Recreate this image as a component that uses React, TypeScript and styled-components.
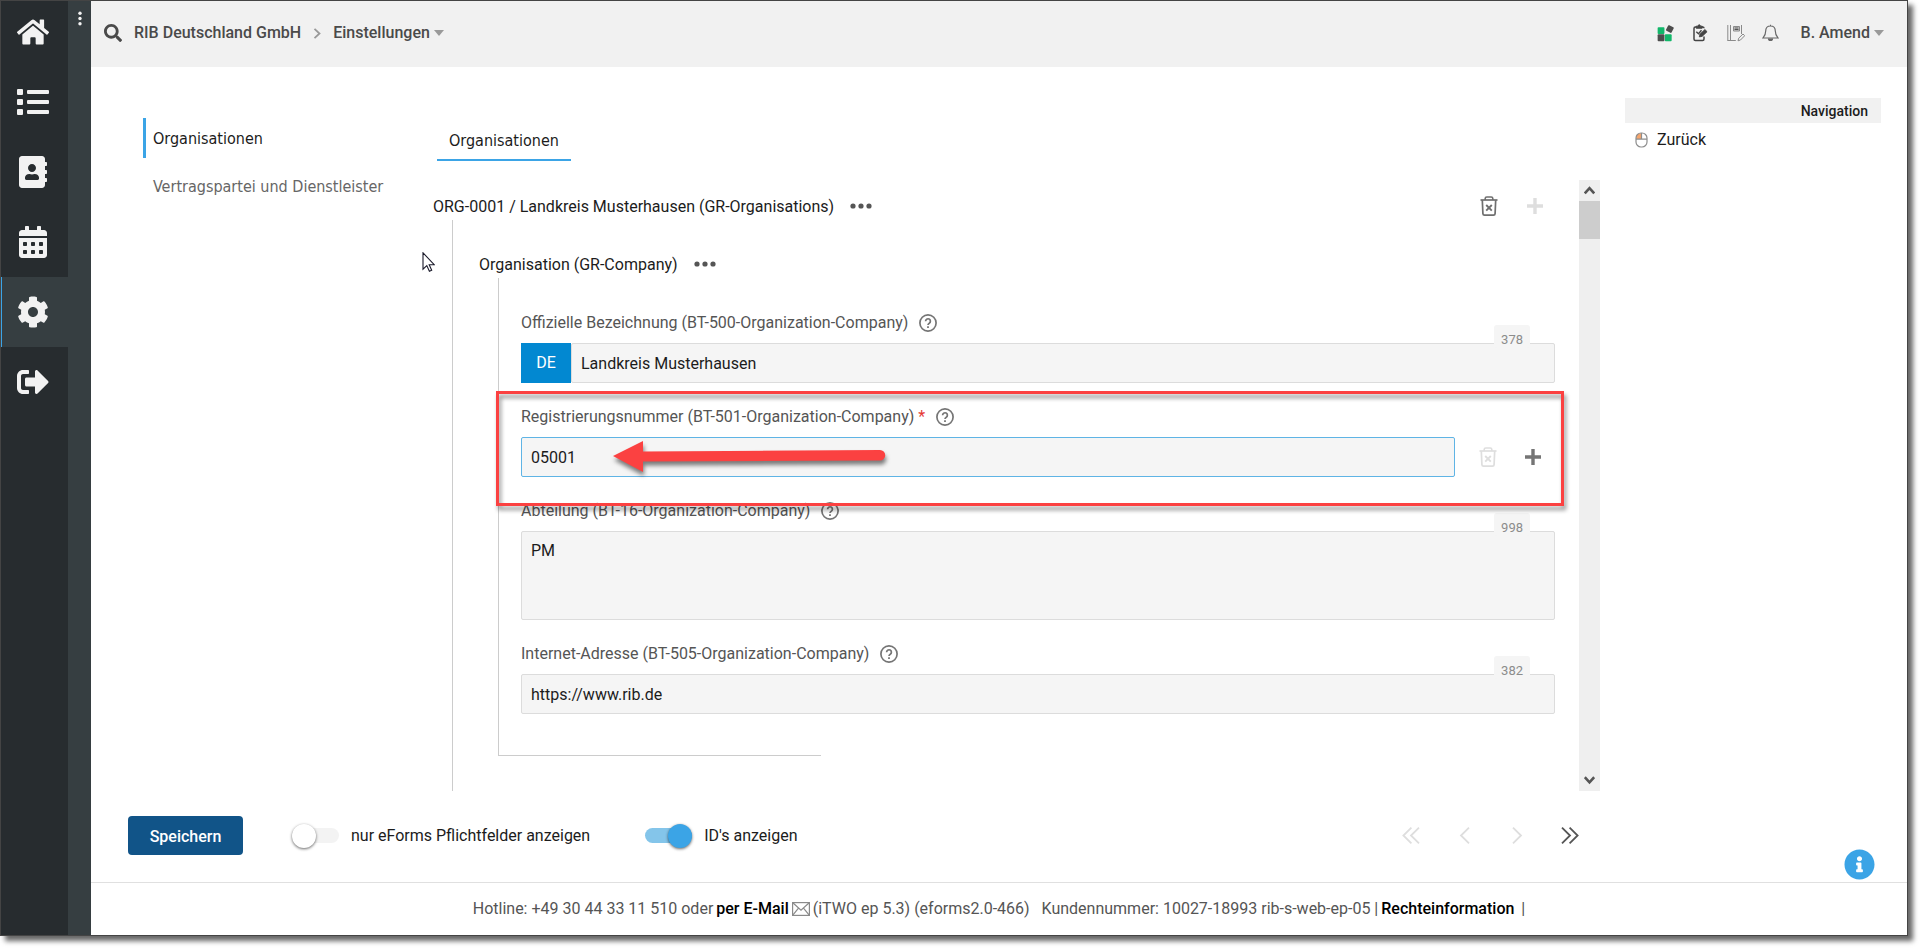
import React, { useState } from "react";
import styled, { createGlobalStyle } from "styled-components";
import {
  FaAddressBook,
  FaCalendarAlt,
  FaCog,
  FaHome,
  FaInfoCircle,
  FaList,
  FaSearch,
  FaSignOutAlt,
} from "react-icons/fa";

const color = {
  rail: "#272c2f",
  railLight: "#363e41",
  bar: "#f1f1f1",
  field: "#f5f5f5",
  border: "#dcdcdc",
  line: "#cccccc",
  blue: "#3ba4e6",
  text: "#1c1c1c",
  muted: "#555555",
  mark: "#fb4141",
};

const navFont = '"DejaVu Sans Condensed", "Noto Sans", sans-serif';

const GlobalStyle = createGlobalStyle`
  * { box-sizing: border-box; }
  body { margin: 0; background: #fff; }
  body, button, input, textarea {
    font-family: Roboto, "Liberation Sans", sans-serif;
    font-size: 16px;
    line-height: 20px;
    color: ${color.text};
  }
  button { border: 0; padding: 0; background: none; cursor: pointer; }
  a { color: inherit; text-decoration: none; }
  svg { display: block; flex: none; }
`;

const Page = styled.div`
  height: 100vh;
  padding: 0 15px 15px 0;
`;

const Window = styled.div`
  display: flex;
  height: 100%;
  border: 1px solid #444;
  background: #fff;
  box-shadow: 5px 5px 5px rgba(0, 0, 0, 0.6);
`;

const Rail = styled.nav`
  flex: none;
  width: 67px;
  background: ${color.rail};
  overflow: hidden;
`;

const RailList = styled.div`
  display: flex;
  flex-direction: column;
  margin-top: -4px;
`;

const RailLink = styled.a<{ $active?: boolean }>`
  display: flex;
  align-items: center;
  height: 70px;
  padding-left: ${(p) => (p.$active ? 15 : 16)}px;
  border-left: ${(p) => (p.$active ? `1px solid ${color.blue}` : "0")};
  background: ${(p) => (p.$active ? color.railLight : "transparent")};
  color: #f2f2f2;
  font-size: 32px;
`;

const RailGrip = styled.button`
  flex: none;
  display: flex;
  justify-content: center;
  width: 23px;
  padding-top: 10px;
  background: ${color.railLight};
`;

const Main = styled.div`
  position: relative;
  flex: 1;
  min-width: 0;
  display: flex;
  flex-direction: column;
`;

const TopBar = styled.header`
  flex: none;
  display: flex;
  align-items: center;
  justify-content: space-between;
  height: 66px;
  padding: 0 23px 2px 13px;
  background: ${color.bar};
`;

const Crumbs = styled.div`
  display: flex;
  align-items: center;
  gap: 12px;
  color: #4a4a4a;
  font-weight: 500;
`;

const CrumbButton = styled.button`
  display: flex;
  align-items: center;
  gap: 4px;
  color: #4a4a4a;
  font-weight: 500;
`;

const Tools = styled.div`
  display: flex;
  align-items: center;
  gap: 17px;
`;

const ToolButton = styled.button`
  display: flex;
  width: 18px;
`;

const UserSlot = styled.div`
  margin-left: 4px;
`;

const Body = styled.div`
  flex: 1;
  min-height: 0;
  display: flex;
  padding: 0 26px 0 52px;
`;

const SideNav = styled.nav`
  flex: none;
  width: 290px;
  padding-top: 51px;
`;

const SideLink = styled.a<{ $active?: boolean }>`
  display: block;
  margin-bottom: 8px;
  padding: 11px 0 9px 7px;
  border-left: 3px solid ${(p) => (p.$active ? color.blue : "transparent")};
  color: ${(p) => (p.$active ? color.text : "#666")};
  font-family: ${navFont};
`;

const FormColumn = styled.main`
  position: relative;
  flex: 1;
  min-width: 0;
  display: flex;
  flex-direction: column;
`;

const Tabs = styled.div`
  flex: none;
  display: flex;
  padding: 54px 0 19px 4px;
`;

const Tab = styled.button`
  padding: 10px 12px 8px;
  border-bottom: 2px solid ${color.blue};
  font-family: ${navFont};
`;

const ScrollFrame = styled.div`
  flex: 1;
  min-height: 0;
  display: flex;
`;

const ScrollView = styled.div`
  flex: 1;
  min-width: 0;
  display: flex;
  flex-direction: column;
  overflow: auto;
  scrollbar-width: none;
`;

const ScrollBar = styled.div`
  flex: none;
  display: flex;
  flex-direction: column;
  width: 21px;
  background: #efefef;
`;

const ScrollButton = styled.button`
  display: flex;
  align-items: center;
  justify-content: center;
  height: 21px;
`;

const ScrollTrack = styled.div`
  flex: 1;
`;

const ScrollThumb = styled.div`
  height: 38px;
  background: #cdcdcd;
`;

const GroupHeader = styled.div<{ $top: number; $indent: number }>`
  flex: none;
  display: flex;
  align-items: center;
  gap: 16px;
  height: 28px;
  margin-top: ${(p) => p.$top}px;
  padding: 0 36px 0 ${(p) => p.$indent}px;
`;

const GroupTitle = styled.h2`
  margin: 0;
  padding-top: 1px;
  font-size: 16px;
  font-weight: 400;
`;

const GroupActions = styled.div`
  display: flex;
  align-items: center;
  gap: 29px;
  margin-left: auto;
`;

const OuterGroup = styled.section`
  display: flow-root;
  flex: 1 0 auto;
  margin-left: 19px;
  border-left: 1px solid ${color.line};
`;

const InnerGroup = styled.section`
  margin-left: 45px;
  border-left: 1px solid ${color.line};
  padding: 35px 24px 41px 22px;
`;

const GroupEnd = styled.div`
  width: 323px;
  margin-left: 45px;
  border-top: 1px solid ${color.line};
`;

const FieldBox = styled.div`
  position: relative;
  & + & {
    margin-top: 24px;
  }
`;

const LabelRow = styled.div`
  display: flex;
  align-items: center;
  gap: 10px;
  height: 20px;
  margin-bottom: 10px;
  color: ${color.muted};
`;

const Required = styled.span`
  color: #e53935;
`;

const ControlRow = styled.div`
  position: relative;
  display: flex;
`;

const Language = styled.span`
  flex: none;
  display: flex;
  align-items: center;
  justify-content: center;
  width: 50px;
  height: 40px;
  background: #0288d1;
  color: #fff;
`;

const TextInput = styled.input<{ $focus?: boolean }>`
  flex: 1;
  min-width: 0;
  height: 40px;
  padding: 0 9px;
  border: 1px solid ${(p) => (p.$focus ? "#5fb4e5" : color.border)};
  border-radius: 2px;
  background: ${color.field};
  outline: none;
`;

const TextBox = styled.textarea`
  display: block;
  flex: 1;
  height: 89px;
  padding: 9px;
  border: 1px solid ${color.border};
  border-radius: 2px;
  background: ${color.field};
  resize: none;
  outline: none;
`;

const Counter = styled.span`
  position: absolute;
  top: -18px;
  right: 25px;
  padding: 7px 7px 0;
  border-radius: 3px;
  background: ${color.field};
  color: #8c8c8c;
  font-size: 13px;
  line-height: 16px;
`;

const RowActions = styled.div`
  display: flex;
  align-items: center;
  gap: 28px;
  padding: 0 14px 0 24px;
`;

const Highlight = styled.div`
  position: absolute;
  z-index: 2;
  inset: -16px -9px -29px -25px;
  border: 3px solid ${color.mark};
  filter: drop-shadow(2px 4px 2px rgba(0, 0, 0, 0.45));
  pointer-events: none;
`;

const ArrowMark = styled.svg`
  position: absolute;
  z-index: 2;
  top: 4px;
  left: 92px;
  overflow: visible;
  filter: drop-shadow(1px 4px 2px rgba(0, 0, 0, 0.5));
  pointer-events: none;
`;

const Pointer = styled.svg`
  position: absolute;
  top: 185px;
  left: -11px;
`;

const Aside = styled.aside`
  flex: none;
  width: 256px;
  margin-left: 25px;
  padding-top: 31px;
`;

const AsideTitle = styled.h3`
  margin: 0;
  padding: 3px 13px 2px;
  background: ${color.bar};
  font-size: 14px;
  font-weight: 500;
  text-align: right;
`;

const AsideLink = styled.a`
  display: flex;
  align-items: center;
  gap: 9px;
  padding: 7px 10px;
`;

const ActionBar = styled.div`
  flex: none;
  display: flex;
  align-items: center;
  height: 91px;
  padding: 0 327px 2px 37px;
`;

const SaveButton = styled.button`
  width: 115px;
  height: 39px;
  margin-right: 49px;
  padding-top: 2px;
  border-radius: 4px;
  background: #115488;
  color: #fff;
  font-weight: 500;
`;

const ToggleLabel = styled.label`
  display: flex;
  align-items: center;
  gap: 12px;
  margin-right: 55px;
`;

const Toggle = styled.input`
  appearance: none;
  position: relative;
  width: 47px;
  height: 15px;
  margin: 0;
  border-radius: 8px;
  background: #f3f3f3;
  &::before {
    content: "";
    position: absolute;
    top: -4px;
    left: 0;
    width: 24px;
    height: 24px;
    border-radius: 50%;
    background: #fff;
    box-shadow: 0 1px 3px rgba(0, 0, 0, 0.6);
  }
  &:checked {
    background: #84c5ea;
  }
  &:checked::before {
    left: 23px;
    background: ${color.blue};
  }
`;

const Pager = styled.div`
  display: flex;
  align-items: center;
  margin-left: auto;
  gap: 33px;
`;

const PagerButton = styled.button`
  display: flex;
  justify-content: center;
  width: 20px;
`;

const InfoButton = styled.button`
  position: absolute;
  right: 32px;
  bottom: 55px;
  color: ${color.blue};
  font-size: 31px;
`;

const Footer = styled.footer`
  flex: none;
  display: flex;
  align-items: center;
  justify-content: center;
  gap: 3px;
  height: 53px;
  border-top: 1px solid #e0e0e0;
  color: ${color.muted};
  white-space: pre;
`;

const FooterLink = styled.a`
  color: #000;
  font-weight: 500;
`;

const Caret = () => (
  <svg width="10" height="6" viewBox="0 0 10 6">
    <path d="M0 0h10L5 6z" fill="#9a9a9a" />
  </svg>
);

const Dots = () => (
  <svg width="22" height="6" viewBox="0 0 22 6" fill="#555">
    <circle cx="3" cy="3" r="2.6" />
    <circle cx="11" cy="3" r="2.6" />
    <circle cx="19" cy="3" r="2.6" />
  </svg>
);

const HelpIcon = () => (
  <svg width="20" height="20" viewBox="0 0 20 20" fill="none" stroke="#757575">
    <circle cx="10" cy="10" r="8.1" strokeWidth="1.7" />
    <path d="M7.6 8.3a2.4 2.4 0 1 1 3.7 1.9c-.9.6-1.3.9-1.3 1.7" strokeWidth="1.7" />
    <path d="M10 13.2v1.8" strokeWidth="1.8" />
  </svg>
);

const TrashIcon = ({ faint }: { faint?: boolean }) => (
  <svg width="18" height="20" viewBox="0 0 18 20" fill="none" stroke={faint ? "#dedede" : "#6f6f6f"}>
    <path d="M0.5 4h17" strokeWidth="1.7" />
    <path d="M5.2 4V2.6Q5.2 1 6.8 1h4.4q1.6 0 1.6 1.6V4" strokeWidth="1.6" />
    <path d="M2.3 4l.6 13.6q.1 1.5 1.6 1.5h9q1.5 0 1.6-1.5L15.7 4" strokeWidth="1.7" />
    <path d="M6.2 9l5.6 5.6M11.8 9l-5.6 5.6" strokeWidth="1.9" />
  </svg>
);

const PlusIcon = ({ faint }: { faint?: boolean }) => (
  <svg width="16" height="16" viewBox="0 0 16 16" stroke={faint ? "#dedede" : "#757575"} strokeWidth="3.4">
    <path d="M8 0v16M0 8h16" />
  </svg>
);

const Chevrons = ({ double, left, faint }: { double?: boolean; left?: boolean; faint?: boolean }) => (
  <svg
    width={double ? 18 : 11}
    height="17"
    viewBox={double ? "0 0 18 17" : "0 0 11 17"}
    fill="none"
    stroke={faint ? "#dedede" : "#555"}
    strokeWidth="1.8"
    transform={left ? "scale(-1 1)" : undefined}
  >
    <path d="M1 .7l8 7.8-8 7.8" />
    {double && <path d="M8.6.7l8 7.8-8 7.8" />}
  </svg>
);

const ScrollArrow = ({ down }: { down?: boolean }) => (
  <svg width="11" height="9" viewBox="0 0 11 9" fill="none" stroke="#555" strokeWidth="2.6">
    <path d={down ? "M.8 1.2l4.7 5.2 4.7-5.2" : "M.8 7.4l4.7-5.2 4.7 5.2"} />
  </svg>
);

const AppsIcon = () => (
  <svg width="17" height="17" viewBox="0 0 16 16">
    <rect x="0.6" y="2" width="6.4" height="6.4" rx="0.8" fill="#12b76a" />
    <rect x="0.6" y="8.8" width="6.4" height="6.400" rx="0.8" fill="#4d4d4d" />
    <rect x="7.4" y="8.8" width="6.400" height="6.400" rx="0.8" fill="#12b76a" />
    <rect x="9.2" y="0.9" width="5.800" height="5.800" rx="0.8" fill="#4d4d4d" transform="rotate(28 12.1 3.8)" />
  </svg>
);

const ClipboardIcon = () => (
  <svg width="17" height="18" viewBox="0 0 17 18" fill="none" stroke="#444">
    <path d="M4.500 3H3.400Q2 3 2 4.500v10.500Q2 16.500 3.400 16.500h7.200q1.400 0 1.400-1.500v-2.500" strokeWidth="1.500" />
    <path d="M9.800 3h.9q1.300 0 1.300 1.300" strokeWidth="1.500" />
    <path d="M4.200 4.200V2.200h1.700Q6.200.8 7.200.8t1.300 1.400h1.700v2z" fill="#444" strokeWidth="1" />
    <path d="M7.300 12.900l.6-2.700 5-4.700 2.200 2.200-5 4.700z" fill="#444" strokeWidth=".8" />
    <path d="M4.300 7.700l2.200 2 3-3.400" strokeWidth="1.400" />
  </svg>
);

const NotebookIcon = () => (
  <svg width="18" height="18" viewBox="0 0 18 18" fill="none" stroke="#8a8a8a" strokeWidth="1">
    <path d="M.8 1v16M3.500 1v16M.8 16.500h8M14.500 1v9" />
    <path d="M6.500 2.500h6v4.500h-6z" fill="#d5d5d5" />
    <path d="M7.500 4h4M7.500 5.500h4" stroke="#555" />
    <path d="M11 16.800l.7-2.600 4.300-4.200 1.700 1.700-4.200 4.300z" />
  </svg>
);

const BellIcon = () => (
  <svg width="17" height="18" viewBox="0 0 17 18" fill="none" stroke="#666" strokeWidth="1.200">
    <path d="M8.500.7v1.300M8.500 2C5.500 2 3.700 4.200 3.700 7c0 4-1.200 5.300-2.700 7h15c-1.500-1.700-2.700-3-2.700-7 0-2.800-1.800-5-4.800-5z" />
    <path d="M6.500 14.500a2 2 0 0 0 4 0" fill="#666" />
  </svg>
);

const MouseIcon = () => (
  <svg width="13" height="16" viewBox="0 0 13 16" fill="none" stroke="#8d8d8d" strokeWidth="1.200">
    <path d="M1.800 2.600Q3 1.300 6.500 1.200V7H1.200Q1 4 1.800 2.600z" fill="#f6a56d" stroke="none" />
    <rect x="1" y="1" width="11" height="14" rx="5" />
    <path d="M1 7.200h11M6.500 1v6.200" />
  </svg>
);

const MailIcon = () => (
  <svg width="18" height="14" viewBox="0 0 18 14" fill="none" stroke="#8a8a8a" strokeWidth="1.200">
    <rect x=".6" y=".6" width="16.800" height="12.800" />
    <path d="M.8.8L9 8.300 17.200.8M.8 13.200l5.700-7M17.200 13.200l-5.700-7" />
  </svg>
);

type FieldProps = {
  id: string;
  label: string;
  required?: boolean;
  highlighted?: boolean;
  children: React.ReactNode;
};

const Field = ({ id, label, required, highlighted, children }: FieldProps) => (
  <FieldBox>
    <LabelRow>
      <label htmlFor={id}>
        {label}
        {required && <Required> *</Required>}
      </label>
      <button type="button" aria-label="Hilfe">
        <HelpIcon />
      </button>
    </LabelRow>
    <ControlRow>{children}</ControlRow>
    {highlighted && <Highlight />}
  </FieldBox>
);

const railItems = [
  { label: "Start", Icon: FaHome },
  { label: "Liste", Icon: FaList },
  { label: "Kontakte", Icon: FaAddressBook },
  { label: "Kalender", Icon: FaCalendarAlt },
  { label: "Verwaltung", Icon: FaCog, active: true },
  { label: "Abmelden", Icon: FaSignOutAlt },
];

export default function App() {
  const [mandatoryOnly, setMandatoryOnly] = useState(false);
  const [showIds, setShowIds] = useState(true);

  return (
    <>
      <GlobalStyle />
      <Page>
        <Window>
          <Rail>
            <RailList>
              {railItems.map(({ label, Icon, active }) => (
                <RailLink key={label} href="#" aria-label={label} $active={active}>
                  <Icon />
                </RailLink>
              ))}
            </RailList>
          </Rail>
          <RailGrip type="button" aria-label="Menü">
            <svg width="4" height="15" viewBox="0 0 4 15" fill="#f2f2f2">
              <circle cx="2" cy="2.2" r="1.7" />
              <circle cx="2" cy="7.5" r="1.7" />
              <circle cx="2" cy="12.8" r="1.7" />
            </svg>
          </RailGrip>
          <Main>
            <TopBar>
              <Crumbs>
                <CrumbButton type="button" aria-label="Suche">
                  <FaSearch size={18} />
                </CrumbButton>
                <a href="#">RIB Deutschland GmbH</a>
                <svg width="8" height="11" viewBox="0 0 8 11" fill="none" stroke="#999" strokeWidth="1.8">
                  <path d="M1.500.8l5 4.700-5 4.700" />
                </svg>
                <CrumbButton type="button">
                  Einstellungen <Caret />
                </CrumbButton>
              </Crumbs>
              <Tools>
                <ToolButton type="button" aria-label="Apps"><AppsIcon /></ToolButton>
                <ToolButton type="button" aria-label="Aufgaben"><ClipboardIcon /></ToolButton>
                <ToolButton type="button" aria-label="Notizen"><NotebookIcon /></ToolButton>
                <ToolButton type="button" aria-label="Meldungen"><BellIcon /></ToolButton>
                <UserSlot>
                  <CrumbButton type="button">
                    B. Amend <Caret />
                  </CrumbButton>
                </UserSlot>
              </Tools>
            </TopBar>
            <Body>
              <SideNav>
                <SideLink href="#" $active>Organisationen</SideLink>
                <SideLink href="#">Vertragspartei und Dienstleister</SideLink>
              </SideNav>
              <FormColumn>
                <Tabs>
                  <Tab type="button">Organisationen</Tab>
                </Tabs>
                <ScrollFrame>
                  <ScrollView>
                    <GroupHeader $top={12} $indent={0}>
                      <GroupTitle>ORG-0001 / Landkreis Musterhausen (GR-Organisations)</GroupTitle>
                      <button type="button" aria-label="Mehr"><Dots /></button>
                      <GroupActions>
                        <button type="button" aria-label="Löschen"><TrashIcon /></button>
                        <button type="button" aria-label="Hinzufügen" disabled><PlusIcon faint /></button>
                      </GroupActions>
                    </GroupHeader>
                    <OuterGroup>
                      <GroupHeader $top={30} $indent={26}>
                        <GroupTitle>Organisation (GR-Company)</GroupTitle>
                        <button type="button" aria-label="Mehr"><Dots /></button>
                      </GroupHeader>
                      <InnerGroup>
                        <Field id="name" label="Offizielle Bezeichnung (BT-500-Organization-Company)">
                          <Language>DE</Language>
                          <TextInput id="name" defaultValue="Landkreis Musterhausen" />
                          <Counter>378</Counter>
                        </Field>
                        <Field id="regno" label="Registrierungsnummer (BT-501-Organization-Company)" required highlighted>
                          <TextInput id="regno" defaultValue="05001" $focus />
                          <RowActions>
                            <button type="button" aria-label="Löschen" disabled><TrashIcon faint /></button>
                            <button type="button" aria-label="Hinzufügen"><PlusIcon /></button>
                          </RowActions>
                          <ArrowMark width="272" height="31" viewBox="0 0 272 31" fill={color.mark}>
                            <path d="M0 15L30 0v10.500L267 9a5 5 0 0 1 0 10.500L30 20.500V31z" />
                          </ArrowMark>
                        </Field>
                        <Field id="department" label="Abteilung (BT-16-Organization-Company)">
                          <TextBox id="department" defaultValue="PM" />
                          <Counter>998</Counter>
                        </Field>
                        <Field id="website" label="Internet-Adresse (BT-505-Organization-Company)">
                          <TextInput id="website" defaultValue="https://www.rib.de" />
                          <Counter>382</Counter>
                        </Field>
                      </InnerGroup>
                      <GroupEnd />
                    </OuterGroup>
                  </ScrollView>
                  <ScrollBar>
                    <ScrollButton type="button" aria-label="Nach oben"><ScrollArrow /></ScrollButton>
                    <ScrollTrack><ScrollThumb /></ScrollTrack>
                    <ScrollButton type="button" aria-label="Nach unten"><ScrollArrow down /></ScrollButton>
                  </ScrollBar>
                </ScrollFrame>
                <Pointer width="13" height="20" viewBox="0 0 13 20">
                  <path d="M1 .8v16.400l3.800-3.600 2.600 5.600 2.300-1-2.500-5.500h5z" fill="#fff" stroke="#1b1b2b" strokeWidth="1.1" />
                </Pointer>
              </FormColumn>
              <Aside>
                <AsideTitle>Navigation</AsideTitle>
                <AsideLink href="#">
                  <MouseIcon />
                  Zurück
                </AsideLink>
              </Aside>
            </Body>
            <ActionBar>
              <SaveButton type="button">Speichern</SaveButton>
              <ToggleLabel>
                <Toggle
                  type="checkbox"
                  checked={mandatoryOnly}
                  onChange={(e) => setMandatoryOnly(e.target.checked)}
                />
                nur eForms Pflichtfelder anzeigen
              </ToggleLabel>
              <ToggleLabel>
                <Toggle type="checkbox" checked={showIds} onChange={(e) => setShowIds(e.target.checked)} />
                ID's anzeigen
              </ToggleLabel>
              <Pager>
                <PagerButton type="button" aria-label="Erste Seite" disabled><Chevrons double left faint /></PagerButton>
                <PagerButton type="button" aria-label="Vorige Seite" disabled><Chevrons left faint /></PagerButton>
                <PagerButton type="button" aria-label="Nächste Seite" disabled><Chevrons faint /></PagerButton>
                <PagerButton type="button" aria-label="Letzte Seite"><Chevrons double /></PagerButton>
              </Pager>
            </ActionBar>
            <Footer>
              <span>Hotline: +49 30 44 33 11 510 oder</span>
              <FooterLink href="#">per E-Mail</FooterLink>
              <MailIcon />
              <span>(iTWO ep 5.3) (eforms2.0-466)   Kundennummer: 10027-18993 rib-s-web-ep-05 |</span>
              <FooterLink href="#">Rechteinformation</FooterLink>
              <span> |</span>
            </Footer>
            <InfoButton type="button" aria-label="Information">
              <FaInfoCircle />
            </InfoButton>
          </Main>
        </Window>
      </Page>
    </>
  );
}
